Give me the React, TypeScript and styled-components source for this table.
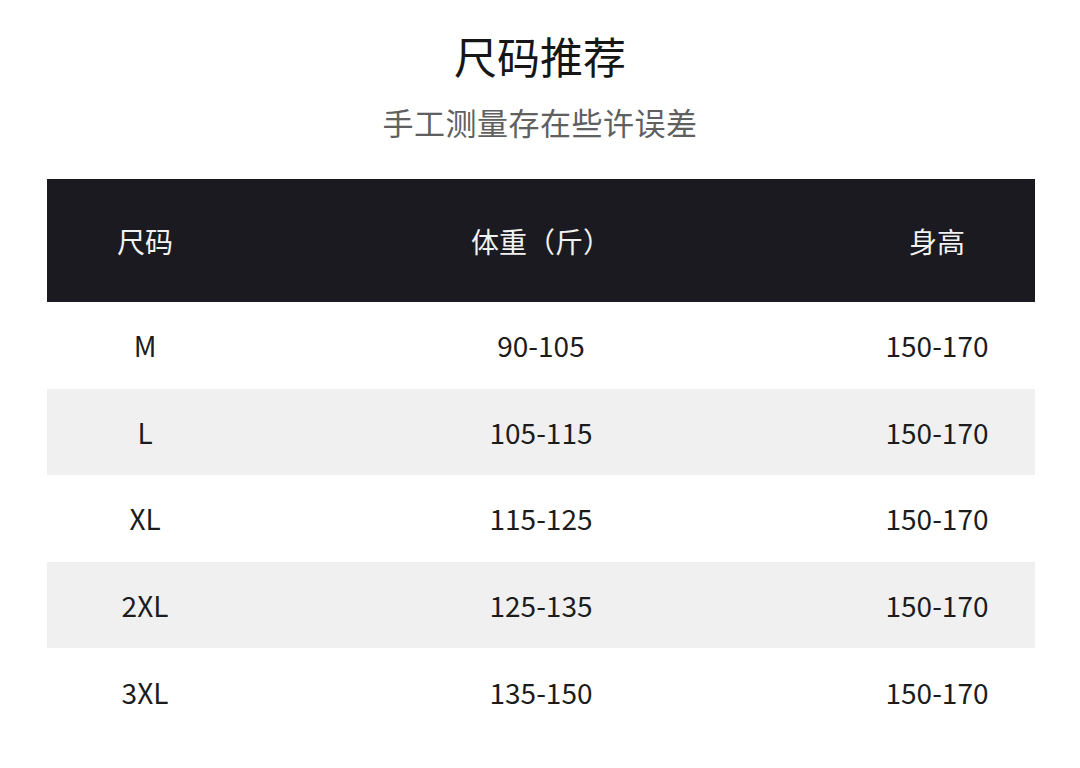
import React from 'react';
import styled, { createGlobalStyle } from 'styled-components';

const GlobalStyle = createGlobalStyle`
  body {
    margin: 0;
    background: #fff;
    font-family: "Noto Sans CJK SC", "Noto Sans", sans-serif;
  }
`;

const Page = styled.div`
  width: 1080px;
  height: 768px;
  background: #fff;
  display: flex;
  flex-direction: column;
  align-items: center;
  padding-top: 30px;
  box-sizing: border-box;
`;

const Title = styled.h1`
  margin: 0;
  font-size: 43px;
  line-height: 50px;
  font-weight: 400;
  color: #161616;
`;

const Subtitle = styled.div`
  margin-top: 22px;
  font-size: 31px;
  line-height: 40px;
  color: #606060;
  letter-spacing: 0.5px;
`;

const Table = styled.div`
  margin-top: 37px;
  width: 988px;
  margin-left: 2px;
  display: flex;
  flex-direction: column;
`;

const Row = styled.div<{ $head?: boolean; $shade?: boolean }>`
  display: grid;
  grid-template-columns: 196px 1fr 196px;
  align-items: center;
  height: ${p => (p.$head ? '123px' : '86.6px')};
  background: ${p => (p.$head ? '#1a1a20' : p.$shade ? '#f0f0f0' : '#fff')};
  color: ${p => (p.$head ? '#f2f2f2' : '#1c1c1c')};
  font-size: 28px;
`;

const Cell = styled.div`
  text-align: center;
  white-space: nowrap;
`;

const rows = [
  ['M', '90-105', '150-170'],
  ['L', '105-115', '150-170'],
  ['XL', '115-125', '150-170'],
  ['2XL', '125-135', '150-170'],
  ['3XL', '135-150', '150-170'],
];

export default function App() {
  return (
    <Page>
      <GlobalStyle />
      <Title>尺码推荐</Title>
      <Subtitle>手工测量存在些许误差</Subtitle>
      <Table>
        <Row $head>
          <Cell>尺码</Cell>
          <Cell>体重（斤）</Cell>
          <Cell>身高</Cell>
        </Row>
        {rows.map((r, i) => (
          <Row key={r[0]} $shade={i % 2 === 1}>
            {r.map((c, j) => (
              <Cell key={j}>{c}</Cell>
            ))}
          </Row>
        ))}
      </Table>
    </Page>
  );
}
